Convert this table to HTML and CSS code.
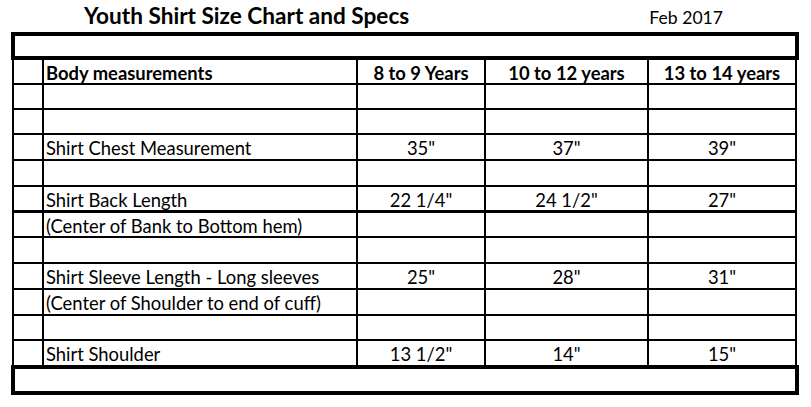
FILE: index.html
```html
<!DOCTYPE html>
<html>
<head>
<meta charset="utf-8">
<link rel="stylesheet" href="styles.css">
</head>
<body>
<div class="sheet">
  <header class="title-row">
    <h1 class="title">Youth Shirt Size Chart and Specs</h1>
    <span class="date">Feb 2017</span>
  </header>
  <div class="box box-top"></div>
  <div class="grid">
    <div class="row head">
      <div class="cell"></div>
      <div class="cell label">Body measurements</div>
      <div class="cell num">8 to 9 Years</div>
      <div class="cell num">10 to 12 years</div>
      <div class="cell num">13 to 14 years</div>
    </div>
    <div class="row"><div class="cell"></div><div class="cell"></div><div class="cell"></div><div class="cell"></div><div class="cell"></div></div>
    <div class="row"><div class="cell"></div><div class="cell"></div><div class="cell"></div><div class="cell"></div><div class="cell"></div></div>
    <div class="row tall">
      <div class="cell"></div>
      <div class="cell label">Shirt Chest Measurement</div>
      <div class="cell num">35"</div>
      <div class="cell num">37"</div>
      <div class="cell num">39"</div>
    </div>
    <div class="row tall"><div class="cell"></div><div class="cell"></div><div class="cell"></div><div class="cell"></div><div class="cell"></div></div>
    <div class="row">
      <div class="cell"></div>
      <div class="cell label">Shirt Back Length</div>
      <div class="cell num">22 1/4"</div>
      <div class="cell num">24 1/2"</div>
      <div class="cell num">27"</div>
    </div>
    <div class="row thick">
      <div class="cell"></div>
      <div class="cell label">(Center of Bank to Bottom hem)</div>
      <div class="cell"></div><div class="cell"></div><div class="cell"></div>
    </div>
    <div class="row tall"><div class="cell"></div><div class="cell"></div><div class="cell"></div><div class="cell"></div><div class="cell"></div></div>
    <div class="row tall">
      <div class="cell"></div>
      <div class="cell label">Shirt Sleeve Length - Long sleeves</div>
      <div class="cell num">25"</div>
      <div class="cell num">28"</div>
      <div class="cell num">31"</div>
    </div>
    <div class="row tall">
      <div class="cell"></div>
      <div class="cell label">(Center of Shoulder to end of cuff)</div>
      <div class="cell"></div><div class="cell"></div><div class="cell"></div>
    </div>
    <div class="row"><div class="cell"></div><div class="cell"></div><div class="cell"></div><div class="cell"></div><div class="cell"></div></div>
    <div class="row tall">
      <div class="cell"></div>
      <div class="cell label">Shirt Shoulder</div>
      <div class="cell num">13 1/2"</div>
      <div class="cell num">14"</div>
      <div class="cell num">15"</div>
    </div>
  </div>
  <div class="box box-bottom"></div>
</div>
</body>
</html>
```

FILE: styles.css
```css
html, body {
  margin: 0;
  padding: 0;
  background: #fff;
}

.sheet {
  width: 811px;
  height: 407px;
  font-family: "Lato", "Noto Sans", sans-serif;
  color: #000;
}

.title-row {
  display: flex;
  align-items: baseline;
  height: 32px;
  box-sizing: border-box;
}

.title {
  margin: 0 0 0 84px;
  font-size: 22.6px;
  font-weight: 700;
  line-height: 31px;
}

.date {
  margin-left: auto;
  margin-right: 88px;
  font-size: 17.6px;
  line-height: 31px;
}

.box {
  margin-left: 11px;
  width: 788px;
  border: 4px solid #000;
  box-sizing: border-box;
  background: #fff;
}

.box-top {
  height: 28px;
}

.box-bottom {
  height: 30px;
}

.grid {
  margin-left: 12px;
  width: 785px;
  background: #000;
  display: flex;
  flex-direction: column;
  gap: 2px;
}

.row {
  display: grid;
  grid-template-columns: 28px 312px 126px 161px 146px;
  column-gap: 2px;
  padding: 0 2px;
  height: 23px;
}

.row.tall {
  height: 24px;
}

.row.thick {
  margin-top: 1px;
}

.cell {
  background: #fff;
  font-size: 18.4px;
  line-height: 27px;
  white-space: nowrap;
  overflow: hidden;
}

.label {
  padding-left: 2px;
}

.num {
  text-align: center;
}

.head .cell {
  font-weight: 700;
}
```
